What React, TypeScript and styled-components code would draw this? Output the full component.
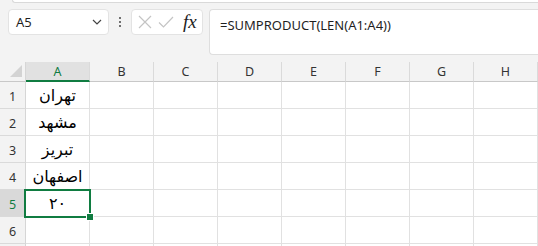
import React from "react";
import styled, { createGlobalStyle, css } from "styled-components";

const GREEN = "#107c41";
const UI_FONT = `"Noto Sans", "Open Sans", "DejaVu Sans", sans-serif`;
const AR_FONT = `"DejaVu Sans", "Noto Sans", sans-serif`;

const Global = createGlobalStyle`
  html, body { margin: 0; padding: 0; }
  body {
    width: 538px;
    height: 246px;
    overflow: hidden;
    background: #f3f3f3;
    font-family: ${UI_FONT};
  }
`;

const Page = styled.div`
  display: flex;
  flex-direction: column;
  width: 538px;
  height: 246px;
  overflow: hidden;
  & > * {
    flex-shrink: 0;
  }
`;

const RibbonEdge = styled.div`
  height: 2px;
  margin-left: 12px;
  background: #ffffff;
  border-left: 1px solid #d9d9d9;
  border-bottom: 1px solid #d9d9d9;
  border-bottom-left-radius: 4px;
`;

const FormulaRow = styled.div`
  box-sizing: border-box;
  display: flex;
  align-items: flex-start;
  padding: 6px 0 0 8px;
  height: 59px;
`;

const NameBox = styled.div`
  box-sizing: border-box;
  display: flex;
  align-items: center;
  justify-content: space-between;
  width: 101px;
  height: 26px;
  padding: 0 6px 0 7px;
  background: #ffffff;
  border: 1px solid #e3e3e3;
  border-radius: 4px;
  font-size: 13px;
  color: #1f1f1f;
`;

const Dots = styled.div`
  display: flex;
  flex-direction: column;
  gap: 2px;
  width: 22px;
  align-items: center;
  padding-top: 8px;
  span {
    width: 2px;
    height: 2px;
    background: #444;
    border-radius: 1px;
  }
`;

const ButtonGroup = styled.div`
  box-sizing: border-box;
  display: flex;
  align-items: center;
  gap: 6px;
  width: 72px;
  height: 26px;
  padding: 0 4px 0 6px;
  background: #ffffff;
  border: 1px solid #e3e3e3;
  border-radius: 4px;
`;

const Fx = styled.span`
  font-family: "Liberation Serif", "DejaVu Serif", serif;
  font-style: italic;
  font-size: 19px;
  color: #222;
  margin-left: 3px;
  line-height: 1;
  margin-top: -2px;
`;

const FormulaInput = styled.div`
  box-sizing: border-box;
  flex: 1;
  height: 46px;
  margin-left: 6px;
  padding: 6px 10px;
  background: #ffffff;
  border: 1px solid #dedede;
  border-right: none;
  border-radius: 4px 0 0 4px;
  font-size: 13px;
  color: #1f1f1f;
`;

const Sheet = styled.div`
  display: grid;
  grid-template-columns: 26px repeat(8, 64px);
  grid-template-rows: 20px repeat(6, 27px) 2px;
`;

const Corner = styled.div`
  box-sizing: border-box;
  position: relative;
  border-right: 1px solid #d6d6d6;
  border-bottom: 1px solid #c8c8c8;
  &::after {
    content: "";
    position: absolute;
    left: 10px;
    top: 3px;
    width: 0;
    height: 0;
    border-left: 12px solid transparent;
    border-bottom: 12px solid #d3d3d3;
  }
`;

const ColHeader = styled.div<{ $active?: boolean }>`
  box-sizing: border-box;
  display: flex;
  align-items: center;
  justify-content: center;
  font-size: 12.5px;
  color: #333;
  border-right: 1px solid #dadada;
  border-bottom: 1px solid #c8c8c8;
  padding-bottom: 1px;
  ${(p) =>
    p.$active &&
    css`
      background: #e1e1e1;
      color: ${GREEN};
      border-bottom: 2px solid ${GREEN};
      padding-bottom: 0;
    `}
`;

const RowHeader = styled.div<{ $active?: boolean }>`
  box-sizing: border-box;
  display: flex;
  align-items: flex-end;
  justify-content: center;
  padding-bottom: 3px;
  font-size: 12.5px;
  color: #333;
  border-right: 1px solid #d6d6d6;
  border-bottom: 1px solid #dadada;
  overflow: hidden;
  ${(p) =>
    p.$active &&
    css`
      background: #d9d9d9;
      color: ${GREEN};
    `}
`;

const Cell = styled.div<{ $selected?: boolean }>`
  box-sizing: border-box;
  position: relative;
  display: flex;
  align-items: flex-end;
  justify-content: center;
  padding-bottom: 3px;
  background: #ffffff;
  border-right: 1px solid #e1e1e1;
  border-bottom: 1px solid #e1e1e1;
  font-family: ${AR_FONT};
  font-size: 16px;
  color: #000;
  direction: rtl;
  ${(p) =>
    p.$selected &&
    css`
      z-index: 1;
      &::before {
        content: "";
        position: absolute;
        left: -2px;
        top: -1px;
        width: 67px;
        height: 29px;
        box-sizing: border-box;
        border: 2px solid ${GREEN};
        pointer-events: none;
      }
      &::after {
        content: "";
        position: absolute;
        left: 60px;
        top: 23px;
        width: 8px;
        height: 8px;
        box-sizing: border-box;
        background: ${GREEN};
        border: 1px solid #ffffff;
      }
    `}
`;

const Cross = () => (
  <svg width="14" height="14" viewBox="0 0 14 14">
    <path d="M1 1 L13 13 M13 1 L1 13" stroke="#c4c4c4" strokeWidth="1.2" fill="none" />
  </svg>
);

const Check = () => (
  <svg width="16" height="14" viewBox="0 0 16 14">
    <path d="M1 7.5 L5.5 12 L15 2" stroke="#c4c4c4" strokeWidth="1.2" fill="none" />
  </svg>
);

const Chevron = () => (
  <svg width="10" height="6" viewBox="0 0 10 6">
    <path d="M1 1 L5 5 L9 1" stroke="#444" strokeWidth="1.2" fill="none" />
  </svg>
);

const columns = ["A", "B", "C", "D", "E", "F", "G", "H"];
const data: Record<number, string> = {
  1: "تهران",
  2: "مشهد",
  3: "تبریز",
  4: "اصفهان",
  5: "۲۰",
};

export default function App() {
  const rows = [1, 2, 3, 4, 5, 6, 7];
  return (
    <>
      <Global />
      <Page>
        <RibbonEdge />
        <FormulaRow>
          <NameBox>
            <span>A5</span>
            <Chevron />
          </NameBox>
          <Dots>
            <span />
            <span />
            <span />
          </Dots>
          <ButtonGroup>
            <Cross />
            <Check />
            <Fx>fx</Fx>
          </ButtonGroup>
          <FormulaInput>=SUMPRODUCT(LEN(A1:A4))</FormulaInput>
        </FormulaRow>
        <Sheet>
          <Corner />
          {columns.map((c) => (
            <ColHeader key={c} $active={c === "A"}>
              {c}
            </ColHeader>
          ))}
          {rows.map((r) => (
            <React.Fragment key={r}>
              <RowHeader $active={r === 5}>{r < 7 ? r : ""}</RowHeader>
              {columns.map((c) => (
                <Cell key={c} $selected={c === "A" && r === 5}>
                  {c === "A" ? data[r] ?? "" : ""}
                </Cell>
              ))}
            </React.Fragment>
          ))}
        </Sheet>
      </Page>
    </>
  );
}
